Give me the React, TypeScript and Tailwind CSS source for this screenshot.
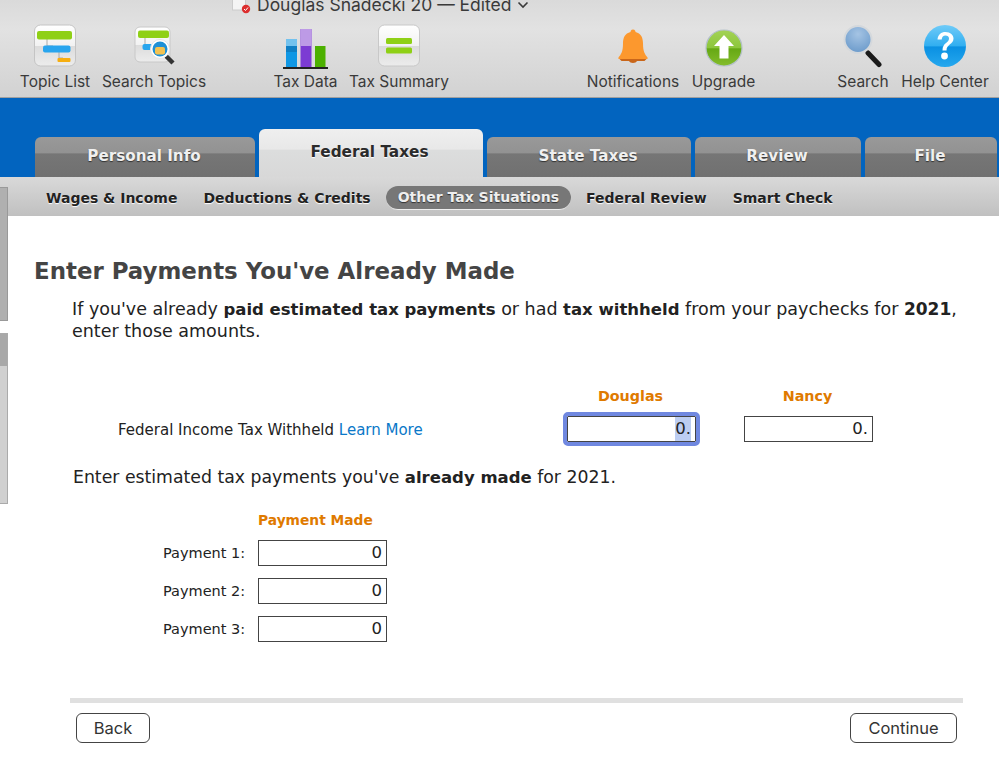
import React from "react";

const sans = "font-['Inter','Liberation_Sans',sans-serif]";

function TopicIcon() {
  return (
    <svg width="44" height="44" viewBox="0 0 44 44">
      <defs>
        <linearGradient id="tile" x1="0" y1="0" x2="0" y2="1">
          <stop offset="0" stopColor="#ffffff" />
          <stop offset="0.5" stopColor="#f2f2f2" />
          <stop offset="0.52" stopColor="#dcdcdc" />
          <stop offset="1" stopColor="#ececec" />
        </linearGradient>
      </defs>
      <rect x="1.5" y="1" width="41" height="41" rx="6" fill="url(#tile)" stroke="#c4c4c4" />
      <path d="M14 14V22M14 22H20M26 26V34H30" stroke="#aaa" fill="none" />
      <rect x="4" y="7" width="35" height="8.500" rx="2" fill="#8fd016" />
      <rect x="10" y="21.500" width="27.500" height="7" rx="2" fill="#28a5ee" />
      <rect x="24.500" y="34" width="13" height="4" rx="1" fill="#f6ae10" />
    </svg>
  );
}

function SearchTopicsIcon() {
  return (
    <svg width="44" height="44" viewBox="0 0 44 44">
      <rect x="3" y="3" width="35" height="35" rx="5" fill="url(#tile)" stroke="#c8c8c8" />
      <path d="M13 14V22H15" stroke="#aaa" fill="none" />
      <rect x="6" y="6.500" width="31" height="7.500" rx="2" fill="#8fd016" />
      <rect x="10.500" y="20" width="16" height="6" rx="2" fill="#28a5ee" />
      <path d="M34 32L41 39" stroke="#333" strokeWidth="4.500" />
      <circle cx="28" cy="25" r="9.500" fill="#fff" stroke="#e4e4e4" />
      <circle cx="28" cy="25" r="7.500" fill="#1e90d6" />
      <rect x="23" y="23" width="10" height="7.500" rx="2" fill="#f3c251" />
    </svg>
  );
}

function TaxDataIcon() {
  return (
    <svg width="46" height="46" viewBox="0 0 46 46" className="shrink-0 self-start">
      <rect x="3" y="15" width="11" height="28" fill="#0f7fc4" />
      <rect x="3" y="15" width="11" height="7" fill="#73c2ee" />
      <rect x="3" y="28" width="11" height="15" fill="#0f97e4" />
      <rect x="17.500" y="5" width="11" height="38" fill="#7c3bd3" />
      <rect x="17.500" y="5" width="11" height="17" fill="#bd9ae6" />
      <rect x="32" y="22" width="10.500" height="21" fill="#4cb000" />
      <rect x="0" y="43" width="45" height="2" fill="#222" />
    </svg>
  );
}

function SummaryIcon() {
  return (
    <svg width="44" height="44" viewBox="0 0 44 44">
      <rect x="1.500" y="1" width="41" height="41" rx="6" fill="url(#tile)" stroke="#c8c8c8" />
      <rect x="9" y="14" width="26" height="6" rx="1.500" fill="#8fd016" />
      <rect x="9" y="23.500" width="26" height="6" rx="1.500" fill="#8fd016" />
    </svg>
  );
}

function BellIcon() {
  return (
    <svg width="44" height="44" viewBox="0 0 44 44">
      <g transform="translate(0 1.500)">
        <path d="M22 4c2 0 2.500 1.500 2.500 2.500C30 8 32 12 32 18c0 8 2 11 4.500 14 .6.800 0 1.500-1 1.500h-27c-1 0-1.600-.7-1-1.500C10 29 12 26 12 18c0-6 2-10 7.500-11.500C19.500 5.500 20 4 22 4z" fill="#fc982e" />
        <path d="M8.500 33.500h27l-2 2h-7.500c-1 2.500-7 2.500-8 0h-7.500z" fill="#c9661a" />
      </g>
    </svg>
  );
}

function UpgradeIcon() {
  return (
    <svg width="44" height="44" viewBox="0 0 44 44">
      <defs>
        <linearGradient id="upg" x1="0" y1="0" x2="0" y2="1">
          <stop offset="0" stopColor="#a3d256" />
          <stop offset="0.5" stopColor="#8cc63c" />
          <stop offset="0.52" stopColor="#66a814" />
          <stop offset="1" stopColor="#84bd2c" />
        </linearGradient>
      </defs>
      <circle cx="22" cy="24" r="18" fill="url(#upg)" stroke="#b4c1c9" strokeWidth="1.200" />
      <path d="M22 11L32 22H26.500V34.500H17.500V22H12z" fill="#fff" />
    </svg>
  );
}

function MagnifierIcon() {
  return (
    <svg width="44" height="44" viewBox="0 0 44 44">
      <defs>
        <radialGradient id="lens" cx="0.5" cy="0.3" r="0.7">
          <stop offset="0" stopColor="#a5c4e4" />
          <stop offset="1" stopColor="#6c9bcb" />
        </radialGradient>
      </defs>
      <path d="M27 29L38 40.500" stroke="#1a1a1a" strokeWidth="5" strokeLinecap="round" />
      <circle cx="17" cy="15.500" r="13.500" fill="url(#lens)" stroke="#d4d8dc" strokeWidth="2" />
    </svg>
  );
}

function HelpIcon() {
  return (
    <svg width="44" height="44" viewBox="0 0 44 44">
      <defs>
        <linearGradient id="hlp" x1="0" y1="0" x2="0" y2="1">
          <stop offset="0" stopColor="#6fcbf8" />
          <stop offset="0.5" stopColor="#31aef0" />
          <stop offset="0.52" stopColor="#0a90e2" />
          <stop offset="1" stopColor="#26a8ee" />
        </linearGradient>
      </defs>
      <circle cx="22" cy="22" r="21" fill="url(#hlp)" />
      <path d="M14.500 15.500C15 10.500 18 8 22.500 8c5 0 8 3 8 6.500 0 6-7 5.500-7 12h-4c0-8 6.500-7.500 6.500-12 0-1.800-1.500-3-3.500-3-2.300 0-3.500 1.500-3.800 4z" fill="#fff" />
      <circle cx="21.500" cy="32" r="3.400" fill="#fff" />
    </svg>
  );
}

function ToolItem({ label, width, children, className = "" }: { label: string; width: string; children: React.ReactNode; className?: string }) {
  return (
    <div className={`flex flex-col items-center ${width} ${className}`}>
      <div className="flex h-[44px] w-[44px] items-center justify-center">{children}</div>
      <span className={`mt-[5px] whitespace-nowrap text-[15.500px] leading-[18px] text-[#3a3a3a] ${sans}`}>{label}</span>
    </div>
  );
}

function Tab({ label, width, active }: { label: string; width: string; active?: boolean }) {
  if (active) {
    return (
      <div className={`flex h-[48px] ${width} justify-center rounded-t-[6px] bg-[linear-gradient(#efefef_0,#e8e8e8_42%,#dcdddd_44%,#d8d8d8_100%)] pr-[3px] pt-[12px] text-[15.300px] font-bold leading-[22px] text-[#2b2b2b] [text-shadow:0_1px_1px_#fff]`}>
        {label}
      </div>
    );
  }
  return (
    <div className={`flex h-[40px] ${width} justify-center rounded-t-[6px] bg-[linear-gradient(#999_0,#929292_40%,#767676_42%,#707070_100%)] pr-[2px] pt-[8px] text-[15.200px] font-bold leading-[22px] text-[#f0f0f0] [text-shadow:0_1px_1px_#333]`}>
      {label}
    </div>
  );
}

function SubItem({ label, active }: { label: string; active?: boolean }) {
  if (active) {
    return (
      <div className="flex h-[24px] items-center rounded-full border-b border-b-[#eee] bg-[#777] px-[12px] text-[14px] font-bold text-[#eee] [text-shadow:0_1px_1px_#333]">
        {label}
      </div>
    );
  }
  return <div className="text-[14px] font-bold text-[#222] [text-shadow:0_1px_1px_#fff]">{label}</div>;
}

function Field({ value, width, selected, focus }: { value: string; width: string; selected?: boolean; focus?: boolean }) {
  return (
    <div className={`flex h-[26px] ${width} items-center justify-end border border-[#444] bg-white pr-[4px] text-[16.500px] text-[#222] ${focus ? "rounded-[1px] outline-[4px] outline-[#7088e0]" : ""}`}>
      <span className={selected ? "bg-[#bccdf2]" : ""}>{value}</span>
    </div>
  );
}

function PaymentRow({ n }: { n: number }) {
  return (
    <div className="flex items-center">
      <div className="w-[224px] whitespace-nowrap pl-[129px] pt-[1px] text-[14.500px] text-[#222]">Payment {n}:</div>
      <Field value="0" width="w-[129px]" />
    </div>
  );
}

export default function App() {
  return (
    <div className="relative h-[758px] w-[999px] overflow-hidden bg-white font-['DejaVu_Sans',sans-serif]">
      <header className="h-[98px] border-b border-b-[#a0a0a0] bg-[linear-gradient(#dadada,#e2e2e2_30%,#d2d2d2)]">
        <div className={`flex h-[24px] items-start pl-[232px] ${sans}`}>
          <div className="-mt-[6px] flex items-center text-[17.500px] leading-[22px] text-[#3a3a3a]">
            <svg width="19" height="20" viewBox="0 0 19 20" className="mr-[6px]">
              <rect x="0.500" y="-4" width="13" height="19" fill="#f4f4f4" stroke="#ccc" />
              <path d="M3 1h7M3 4h7" stroke="#999" />
              <circle cx="14" cy="14" r="4.200" fill="#dc2f2f" />
              <path d="M12 14l1.500 1.500L16 12.500" stroke="#fff" fill="none" />
            </svg>
            Douglas Snadecki 20 — Edited
            <svg width="12" height="8" viewBox="0 0 12 8" className="ml-[5px]">
              <path d="M1.500 1.500L6 6l4.500-4.500" stroke="#3a3a3a" strokeWidth="1.600" fill="none" />
            </svg>
          </div>
        </div>
        <div className="flex pl-[20px]">
          <ToolItem label="Topic List" width="w-[70px]"><TopicIcon /></ToolItem>
          <ToolItem label="Search Topics" width="w-[104px]" className="ml-[12px]"><SearchTopicsIcon /></ToolItem>
          <ToolItem label="Tax Data" width="w-[63px]" className="ml-[68px]"><TaxDataIcon /></ToolItem>
          <ToolItem label="Tax Summary" width="w-[98px]" className="ml-[13px]"><SummaryIcon /></ToolItem>
          <ToolItem label="Notifications" width="w-[92px]" className="ml-[139px]"><BellIcon /></ToolItem>
          <ToolItem label="Upgrade" width="w-[63px]" className="ml-[13px]"><UpgradeIcon /></ToolItem>
          <ToolItem label="Search" width="w-[50px]" className="ml-[83px]"><MagnifierIcon /></ToolItem>
          <ToolItem label="Help Center" width="w-[88px]" className="ml-[13px]"><HelpIcon /></ToolItem>
        </div>
      </header>

      <div className="flex h-[79px] items-end gap-[4px] bg-[#0264bf] pl-[35px]">
        <Tab label="Personal Info" width="w-[220px]" />
        <Tab label="Federal Taxes" width="w-[224px]" active />
        <Tab label="State Taxes" width="w-[204px]" />
        <Tab label="Review" width="w-[166px]" />
        <Tab label="File" width="w-[132px]" />
      </div>

      <nav className="flex h-[39px] items-center gap-[26px] bg-[linear-gradient(#d9d9d9,#c0c0c0)] pl-[46px] pt-[3px]">
        <SubItem label="Wages & Income" />
        <SubItem label="Deductions & Credits" />
        <div className="-mx-[11px]"><SubItem label="Other Tax Situations" active /></div>
        <SubItem label="Federal Review" />
        <SubItem label="Smart Check" />
      </nav>

      <div className="absolute left-0 top-[187px] h-[134px] w-[8px] border border-l-0 border-[#999] bg-[#b0b0b0]" />
      <div className="absolute left-0 top-[333px] h-[171px] w-[8px] border border-l-0 border-[#aaa] bg-[linear-gradient(#a8a8a8_0,#a8a8a8_19%,#d0d0d0_19%,#d0d0d0_100%)]" />

      <main className="pl-[34px]">
        <h1 className="mt-[38px] text-[22.900px] font-bold leading-[34px] text-[#444]">Enter Payments You've Already Made</h1>
        <p className="ml-[38px] mt-[10px] w-[900px] text-[17.500px] leading-[22px] text-[#222]">
          If you've already <b className="text-[16.500px] leading-none">paid estimated tax payments</b> or had <b className="text-[16.500px] leading-none">tax withheld</b> from your paychecks for <b className="text-[17px] leading-none">2021</b>, enter those amounts.
        </p>

        <div className="mt-[44px] flex pl-[531px] text-[14.300px] font-bold leading-[20px] text-[#df7a00]">
          <div className="ml-[1px] w-[129px] text-center">Douglas</div>
          <div className="ml-[48px] w-[129px] text-center">Nancy</div>
        </div>
        <div className="mt-[10px] flex items-center">
          <div className="ml-[84px] w-[449px] pt-[2px] text-[15px] text-[#222]">
            Federal Income Tax Withheld <span className="text-[#0a78c8]">Learn More</span>
          </div>
          <Field value="0." width="w-[129px]" selected focus />
          <Field value="0." width="ml-[48px] w-[129px]" />
        </div>

        <p className="ml-[39px] mt-[23px] text-[17.300px] leading-[24px] text-[#222]">
          Enter estimated tax payments you've <b className="text-[16.500px] leading-none">already made</b> for 2021.
        </p>

        <div className="ml-[224px] mt-[21px] text-[13.800px] font-bold leading-[20px] text-[#df7a00]">Payment Made</div>
        <div className="mt-[10px] flex flex-col gap-[12px]">
          <PaymentRow n={1} />
          <PaymentRow n={2} />
          <PaymentRow n={3} />
        </div>
      </main>

      <footer className="ml-[70px] mr-[36px] mt-[56px] border-t-[5px] border-t-[#e0e0e0]">
        <div className={`mt-[10px] flex justify-between px-[6px] ${sans}`}>
          <button className="h-[30px] w-[74px] rounded-[6px] border border-[#444] bg-white text-[16.500px] leading-none text-[#333]">Back</button>
          <button className="h-[30px] w-[107px] rounded-[6px] border border-[#444] bg-white text-[16.500px] leading-none text-[#333]">Continue</button>
        </div>
      </footer>
    </div>
  );
}
